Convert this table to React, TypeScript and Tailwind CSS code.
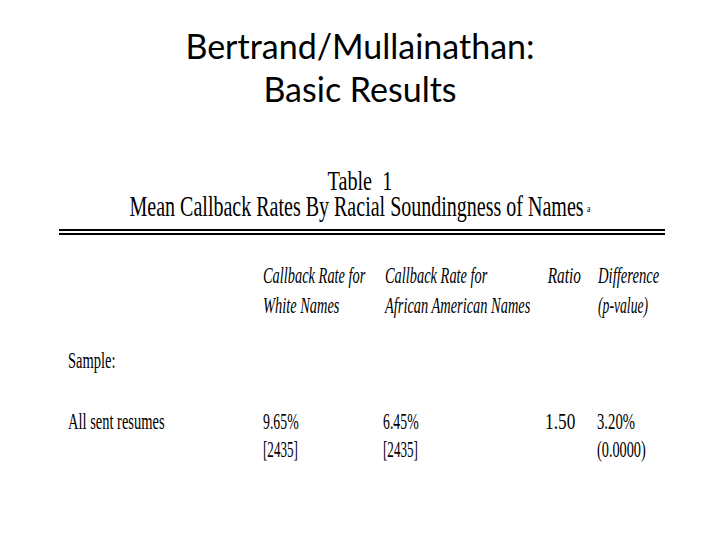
import React from "react";

const serif = { fontFamily: '"Liberation Serif", "Times New Roman", serif' };

function T({
  children,
  s = "scale-x-[0.63]",
  o = "origin-left",
  className = "",
}: {
  children: React.ReactNode;
  s?: string;
  o?: string;
  className?: string;
}) {
  return <span className={`inline-block whitespace-nowrap ${s} ${o} ${className}`}>{children}</span>;
}

export default function App() {
  return (
    <div className="w-[720px] h-[540px] bg-white text-black overflow-hidden relative">
      {/* Title */}
      <div
        className="pt-[24px] text-center text-[34px] leading-[43px]"
        style={{ fontFamily: 'Lato, "Open Sans", sans-serif' }}
      >
        <div>Bertrand/Mullainathan:</div>
        <div>Basic Results</div>
      </div>

      {/* Table */}
      <div style={serif}>
        <div className="mt-[58px] h-[25px] text-center text-[28px] leading-[25px]">
          <T s="scale-x-[0.72]" o="origin-center">Table&nbsp; 1</T>
        </div>
        <div className="h-[26px] text-center text-[29px] leading-[26px]">
          <T s="scale-x-[0.69]" o="origin-center">
            Mean Callback Rates By Racial Soundingness of Names
            <sup className="text-[11px] ml-[5px] relative -top-[4px]">a</sup>
          </T>
        </div>
        <div className="mt-[10px] ml-[59px] w-[606px] h-[6px] border-y-2 border-black" />

        {/* Header */}
        <div className="mt-[25px] ml-[68px] grid grid-cols-[195px_120px_158px_40px_1fr] italic text-[24px] leading-[30px]">
          <div />
          <div>
            <div><T s="scale-x-[0.6]">Callback Rate for</T></div>
            <div><T s="scale-x-[0.6]">White Names</T></div>
          </div>
          <div className="pl-[2px]">
            <div><T s="scale-x-[0.6]">Callback Rate for</T></div>
            <div><T s="scale-x-[0.6]">African American Names</T></div>
          </div>
          <div className="flex justify-end">
            <T s="scale-x-[0.64]" o="origin-right">Ratio</T>
          </div>
          <div className="pl-[17px]">
            <div><T s="scale-x-[0.61]">Difference</T></div>
            <div><T s="scale-x-[0.57]">(p-value)</T></div>
          </div>
        </div>

        {/* Sample label */}
        <div className="mt-[26px] ml-[68px] h-[30px] text-[23px] leading-[30px]">
          <T>Sample:</T>
        </div>

        {/* Data rows */}
        <div className="mt-[31px] ml-[68px] grid grid-cols-[195px_120px_158px_40px_1fr] text-[23px]">
          <div className="leading-[30px]"><T>All sent resumes</T></div>
          <div>
            <div className="leading-[30px]"><T s="scale-x-[0.6]">9.65%</T></div>
            <div className="leading-[25px]"><T s="scale-x-[0.57]">[2435]</T></div>
          </div>
          <div>
            <div className="leading-[30px]"><T s="scale-x-[0.6]">6.45%</T></div>
            <div className="leading-[25px]"><T s="scale-x-[0.57]">[2435]</T></div>
          </div>
          <div className="flex justify-end leading-[30px] pr-[6px]">
            <T s="scale-x-[0.75]" o="origin-right">1.50</T>
          </div>
          <div className="pl-[16px]">
            <div className="leading-[30px]"><T s="scale-x-[0.64]">3.20%</T></div>
            <div className="leading-[25px]"><T s="scale-x-[0.62]">(0.0000)</T></div>
          </div>
        </div>
      </div>
    </div>
  );
}
